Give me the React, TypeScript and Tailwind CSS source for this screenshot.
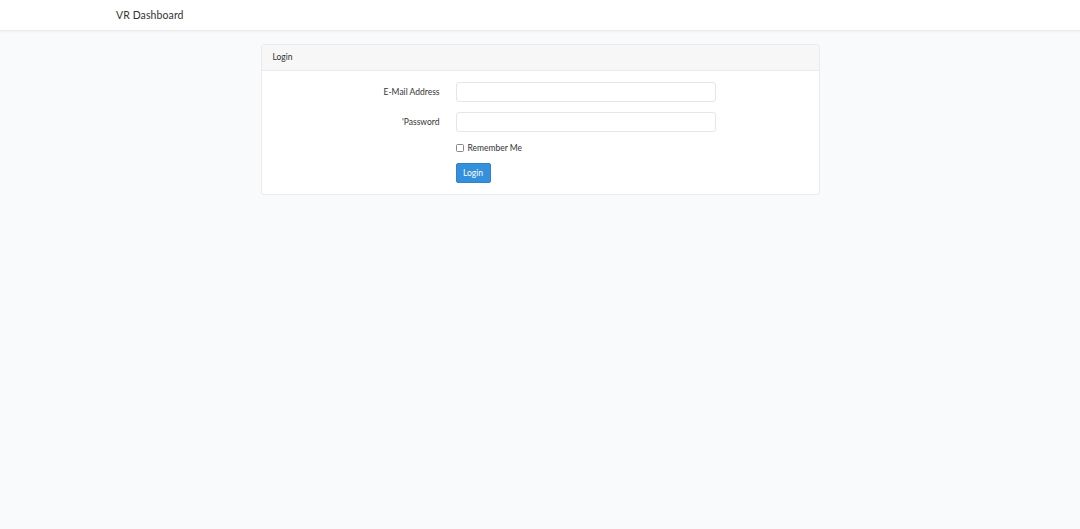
import React from 'react';

export default function App() {
  return (
    <div className="min-h-screen bg-[#f8fafc] text-[#212529]" style={{ fontFamily: 'Lato, "Noto Sans", sans-serif' }}>
      <nav className="h-[31px] bg-white border-b border-[#e9ecef] shadow-[0_1px_2px_rgba(0,0,0,0.04)]">
        <div className="mx-auto w-[864px] px-2 pt-[2px] h-full flex items-center">
          <span className="text-[10.5px] text-[#333] tracking-[0.1px]">VR Dashboard</span>
        </div>
      </nav>

      <main className="pt-[13px]">
        <div className="mx-auto w-[559px] bg-white border border-[#e8eaed] rounded-[3px]">
          <div className="h-[26px] px-[11px] flex items-center bg-[#f7f7f7] border-b border-[#e8eaed] text-[8.5px] text-[#333]">
            Login
          </div>

          <form className="pt-[11px] pb-[11px] flex flex-col leading-none">
            <div className="flex items-center">
              <label className="w-[178px] text-right text-[8.5px] text-[#333]">E-Mail Address</label>
              <input type="email" className="ml-[16px] w-[260px] h-[20px] border border-[#e4e6e9] rounded-[3px] bg-white outline-none" />
            </div>
            <div className="flex items-center mt-[10px]">
              <label className="w-[178px] text-right text-[8.5px] text-[#333]">'Password</label>
              <input type="password" className="ml-[16px] w-[260px] h-[20px] border border-[#e4e6e9] rounded-[3px] bg-white outline-none" />
            </div>
            <div className="flex items-center h-[8px] mt-[12px] ml-[194px]">
              <span className="w-[8px] h-[8px] border border-[#888] rounded-[1.5px] bg-white" />
              <span className="ml-[4px] text-[8.5px] text-[#333]">Remember Me</span>
            </div>
            <div className="flex mt-[11px] ml-[194px]">
              <button type="button" className="w-[35px] h-[20px] bg-[#3490dc] text-white text-[8.5px] rounded-[2px] border border-[#3183c8] leading-none">
                Login
              </button>
            </div>
          </form>
        </div>
      </main>
    </div>
  );
}
